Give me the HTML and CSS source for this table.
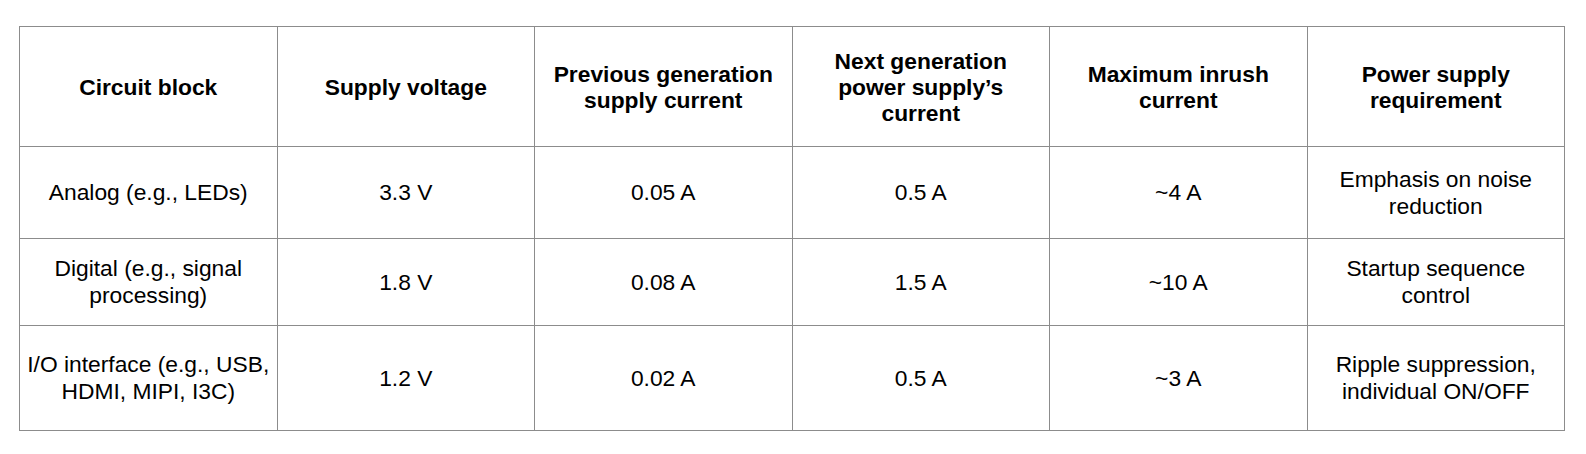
FILE: index.html
```html
<!DOCTYPE html>
<html lang="en">
<head>
<meta charset="utf-8">
<title>Power supply requirements</title>
<link rel="stylesheet" href="styles.css">
</head>
<body>
<table class="spec-table">
  <thead>
    <tr class="row-head">
      <th>Circuit block</th>
      <th>Supply voltage</th>
      <th>Previous generation<br>supply current</th>
      <th>Next generation<br>power supply’s<br>current</th>
      <th>Maximum inrush<br>current</th>
      <th>Power supply<br>requirement</th>
    </tr>
  </thead>
  <tbody>
    <tr class="row-1">
      <td>Analog (e.g., LEDs)</td>
      <td>3.3 V</td>
      <td>0.05 A</td>
      <td>0.5 A</td>
      <td>~4 A</td>
      <td>Emphasis on noise<br>reduction</td>
    </tr>
    <tr class="row-2">
      <td>Digital (e.g., signal<br>processing)</td>
      <td>1.8 V</td>
      <td>0.08 A</td>
      <td>1.5 A</td>
      <td>~10 A</td>
      <td>Startup sequence<br>control</td>
    </tr>
    <tr class="row-3">
      <td>I/O interface (e.g., USB,<br>HDMI, MIPI, I3C)</td>
      <td>1.2 V</td>
      <td>0.02 A</td>
      <td>0.5 A</td>
      <td>~3 A</td>
      <td>Ripple suppression,<br>individual ON/OFF</td>
    </tr>
  </tbody>
</table>
</body>
</html>
```
FILE: styles.css
```css
html, body {
  margin: 0;
  padding: 0;
  background: #ffffff;
}

body {
  padding: 26px 0 0 19px;
  font-family: "Liberation Sans", Arial, sans-serif;
  color: #000000;
}

.spec-table {
  border-collapse: collapse;
  table-layout: fixed;
  width: 1546px;
}

.spec-table th,
.spec-table td {
  border: 1px solid #8c8c8c;
  padding: 0 4px;
  text-align: center;
  vertical-align: middle;
  font-size: 22.8px;
  line-height: 27px;
  white-space: nowrap;
}

.spec-table th {
  font-weight: bold;
  line-height: 26px;
}

.row-head { height: 120px; }
.row-1 { height: 92px; }
.row-2 { height: 87px; }
.row-3 { height: 105px; }
```
